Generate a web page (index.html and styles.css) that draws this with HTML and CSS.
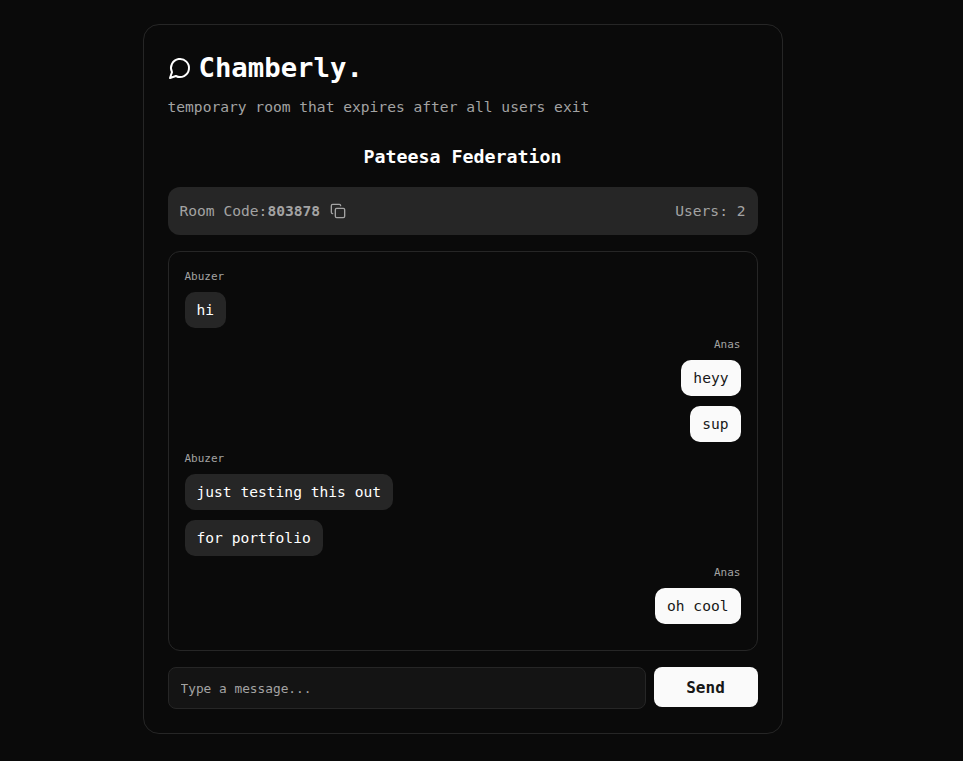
FILE: index.html
```html
<!DOCTYPE html>
<html lang="en">
<head>
  <meta charset="UTF-8">
  <meta name="viewport" content="width=device-width, initial-scale=1.0">
  <title>Chamberly.</title>
  <link rel="stylesheet" href="styles.css">
</head>
<body>

<div class="card">
  <!-- Header -->
  <h1 class="logo">
    <svg class="logo-icon" viewBox="0 0 24 24" fill="none" stroke="#fff" stroke-width="2" stroke-linecap="round" stroke-linejoin="round">
      <path d="M7.9 20A9 9 0 1 0 4 16.1L2 22Z"/>
    </svg>
    Chamberly.
  </h1>
  <p class="tagline">temporary room that expires after all users exit</p>
  <h2 class="room-name">Pateesa Federation</h2>

  <!-- Room info -->
  <div class="room-bar">
    <div class="room-code">
      <span>Room Code:<b>803878</b></span>
      <svg class="copy-icon" viewBox="0 0 24 24" fill="none" stroke="#a3a3a3" stroke-width="2" stroke-linecap="round" stroke-linejoin="round">
        <rect x="8" y="8" width="14" height="14" rx="2" ry="2"/>
        <path d="M4 16c-1.1 0-2-.9-2-2V4c0-1.1.9-2 2-2h10c1.1 0 2 .9 2 2"/>
      </svg>
    </div>
    <span>Users: 2</span>
  </div>

  <!-- Messages -->
  <div class="chat">
    <div class="group">
      <div class="sender">Abuzer</div>
      <div class="bubble">hi</div>
    </div>
    <div class="group mine">
      <div class="sender">Anas</div>
      <div class="bubble">heyy</div>
      <div class="bubble">sup</div>
    </div>
    <div class="group">
      <div class="sender">Abuzer</div>
      <div class="bubble">just testing this out</div>
      <div class="bubble">for portfolio</div>
    </div>
    <div class="group mine">
      <div class="sender">Anas</div>
      <div class="bubble">oh cool</div>
    </div>
  </div>

  <!-- Send form -->
  <form class="send-form">
    <input type="text" class="message-input" placeholder="Type a message...">
    <button type="submit" class="send-btn">Send</button>
  </form>
</div>

</body>
</html>
```

FILE: styles.css
```css
body {
  font-family: "DejaVu Sans Mono", monospace;
  background-color: #0a0a0a;
  color: #fff;
  margin: 0;
  padding: 24px 0 0;
}
.card {
  box-sizing: border-box;
  width: 640px;
  height: 710px;
  margin-left: 142.5px;
  padding: 24px;
  border: 1px solid #262626;
  border-radius: 16px;
}
.logo {
  display: flex;
  align-items: center;
  gap: 7px;
  margin: 0 0 10px;
  height: 38px;
  font-size: 27.3px;
  line-height: 38px;
  font-weight: bold;
}
.logo-icon {
  width: 24px;
  height: 24px;
}
.tagline {
  margin: 0 0 26px;
  font-size: 14.6px;
  line-height: 20px;
  color: #a3a3a3;
}
.room-name {
  margin: 0 0 16px;
  font-size: 18.3px;
  line-height: 28px;
  text-align: center;
}
.room-bar {
  box-sizing: border-box;
  display: flex;
  justify-content: space-between;
  align-items: center;
  height: 48px;
  padding: 0 12px 2px;
  margin-bottom: 16px;
  background-color: #262626;
  border-radius: 12px;
  font-size: 14.6px;
  line-height: 19px;
  color: #a3a3a3;
}
.room-code {
  display: flex;
  align-items: center;
  gap: 10px;
}
.copy-icon {
  width: 16px;
  height: 16px;
  margin-top: 2px;
}
.chat {
  box-sizing: border-box;
  height: 400px;
  padding: 16px;
  margin-bottom: 16px;
  border: 1px solid #262626;
  border-radius: 12px;
}
.group {
  display: flex;
  flex-direction: column;
  align-items: flex-start;
  margin-bottom: 8px;
}
.group.mine {
  align-items: flex-end;
}
.sender {
  font-size: 11px;
  line-height: 18px;
  margin-bottom: 6px;
  color: #a3a3a3;
}
.bubble {
  height: 36px;
  padding: 0 12px;
  margin-bottom: 10px;
  font-size: 14.6px;
  line-height: 36px;
  border-radius: 10px;
  background-color: #262626;
  color: #fff;
}
.group .bubble:last-child {
  margin-bottom: 0;
}
.mine .bubble {
  background-color: #fafafa;
  color: #171717;
}
.send-form {
  display: flex;
  align-items: flex-start;
  gap: 8px;
}
.message-input {
  flex: 1;
  box-sizing: border-box;
  height: 42px;
  padding: 0 12px;
  background-color: #141414;
  border: 1px solid #262626;
  border-radius: 8px;
  color: #fff;
  font-family: "DejaVu Sans Mono", monospace;
  font-size: 12.8px;
}
.message-input::placeholder {
  color: #a3a3a3;
}
.send-btn {
  width: 104px;
  height: 40px;
  background-color: #fafafa;
  color: #171717;
  border: none;
  border-radius: 8px;
  font-family: "DejaVu Sans Mono", monospace;
  font-size: 16px;
  font-weight: bold;
  cursor: pointer;
}
```
